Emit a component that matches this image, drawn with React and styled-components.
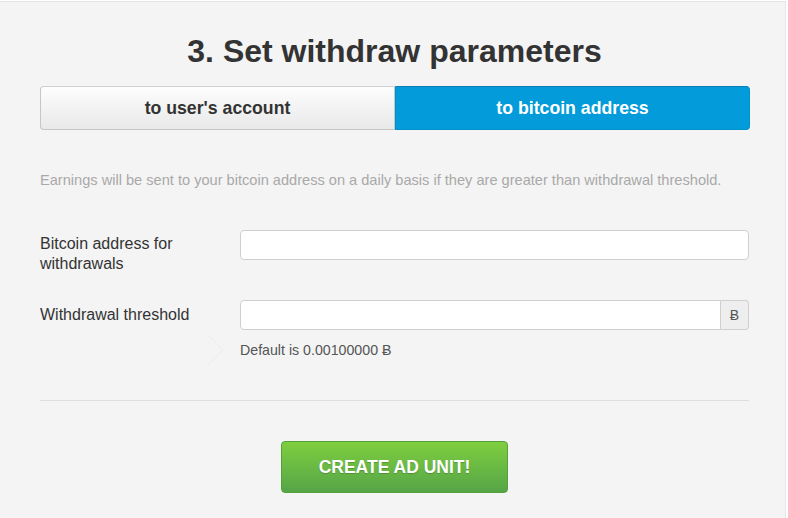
import React, { useState } from "react";
import styled, { createGlobalStyle } from "styled-components";

const GlobalStyle = createGlobalStyle`
  html, body {
    margin: 0;
    padding: 0;
    background: #fff;
    font-family: "Liberation Sans", Arial, sans-serif;
  }
`;

const Panel = styled.div`
  box-sizing: border-box;
  width: 786px;
  height: 518px;
  margin-top: 1px;
  background: #f4f4f4;
  border-top: 1px solid #e2e2e2;
  border-right: 1px solid #e6e6e6;
  padding: 0 36px 0 40px;
  display: flex;
  flex-direction: column;
`;

const Title = styled.h2`
  margin: 30px 0 0;
  height: 38px;
  line-height: 38px;
  text-align: center;
  font-size: 32px;
  font-weight: 700;
  color: #333;
`;

const Tabs = styled.div`
  display: flex;
  margin-top: 16px;
  height: 44px;
`;

const Tab = styled.button`
  flex: 0 0 ${(p) => p.$w}px;
  box-sizing: border-box;
  border: 1px solid ${(p) => (p.$active ? "#0290cb" : "#c6c6c6")};
  border-top-color: ${(p) => (p.$active ? "#0b7fb3" : "#d0d0d0")};
  border-radius: ${(p) => (p.$first ? "4px 0 0 4px" : "0 4px 4px 0")};
  background: ${(p) =>
    p.$active ? "#039bd9" : "linear-gradient(#fdfdfd, #e9e9e9)"};
  color: ${(p) => (p.$active ? "#fff" : "#333")};
  font-family: inherit;
  font-size: 17.7px;
  font-weight: 700;
  cursor: pointer;
  padding: 0;
`;

const Hint = styled.p`
  margin: 41px 0 0;
  font-size: 14.6px;
  line-height: 18px;
  color: #a9a9a9;
  white-space: nowrap;
`;

const Row = styled.div`
  display: flex;
  align-items: ${(p) => (p.$top ? "flex-start" : "center")};
  margin-top: ${(p) => p.$mt}px;
`;

const Label = styled.label`
  flex: 0 0 200px;
  font-size: 16px;
  line-height: 20px;
  color: #333;
  padding-top: ${(p) => p.$pt || 0}px;
`;

const InputGroup = styled.div`
  flex: 1;
  display: flex;
  height: 30px;
`;

const Input = styled.input`
  flex: 1;
  box-sizing: border-box;
  height: 30px;
  border: 1px solid #cfcfcf;
  border-radius: ${(p) => (p.$addon ? "4px 0 0 4px" : "4px")};
  background: #fff;
  padding: 4px 8px;
  font-family: inherit;
  font-size: 14px;
  outline: none;
`;

const Addon = styled.span`
  box-sizing: border-box;
  width: 28px;
  height: 30px;
  display: flex;
  align-items: center;
  justify-content: center;
  border: 1px solid #cfcfcf;
  border-left: none;
  border-radius: 0 4px 4px 0;
  background: #eee;
  color: #555;
  font-size: 14px;
`;

const HelpRow = styled.div`
  display: flex;
  align-items: center;
  margin-top: 3px;
  height: 34px;
`;

const Spacer = styled.div`
  flex: 0 0 200px;
  display: flex;
  justify-content: flex-end;
  padding-right: 16px;
  box-sizing: border-box;
`;

const Help = styled.span`
  font-size: 14.2px;
  color: #555;
`;

const Divider = styled.hr`
  margin: 33px 0 0;
  border: none;
  border-top: 1px solid #dedede;
`;

const Footer = styled.div`
  display: flex;
  justify-content: center;
  margin-top: 40px;
`;

const CreateButton = styled.button`
  width: 227px;
  height: 52px;
  border: 1px solid #52a13b;
  border-radius: 4px;
  background: linear-gradient(#7fce3f, #55a548);
  color: #fff;
  font-family: inherit;
  font-size: 17.5px;
  font-weight: 700;
  text-shadow: 0 1px 1px rgba(0, 0, 0, 0.2);
  cursor: pointer;
`;

function Chevron() {
  return (
    <svg width="18" height="34" viewBox="0 0 18 34">
      <path d="M1 1 L17 17 L1 33" fill="none" stroke="#ebebeb" strokeWidth="1" />
    </svg>
  );
}

export default function App() {
  const [mode, setMode] = useState("bitcoin");
  return (
    <>
      <GlobalStyle />
      <Panel>
        <Title>3. Set withdraw parameters</Title>
        <Tabs>
          <Tab
            $first
            $w={355}
            $active={mode === "account"}
            onClick={() => setMode("account")}
          >
            to user's account
          </Tab>
          <Tab
            $w={355}
            $active={mode === "bitcoin"}
            onClick={() => setMode("bitcoin")}
          >
            to bitcoin address
          </Tab>
        </Tabs>
        <Hint>
          Earnings will be sent to your bitcoin address on a daily basis if they
          are greater than withdrawal threshold.
        </Hint>
        <Row $top $mt={41}>
          <Label $pt={4}>
            Bitcoin address for
            <br />
            withdrawals
          </Label>
          <InputGroup>
            <Input />
          </InputGroup>
        </Row>
        <Row $mt={26}>
          <Label>Withdrawal threshold</Label>
          <InputGroup>
            <Input $addon />
            <Addon>Ƀ</Addon>
          </InputGroup>
        </Row>
        <HelpRow>
          <Spacer>
            <Chevron />
          </Spacer>
          <Help>Default is 0.00100000 Ƀ</Help>
        </HelpRow>
        <Divider />
        <Footer>
          <CreateButton>CREATE AD UNIT!</CreateButton>
        </Footer>
      </Panel>
    </>
  );
}
